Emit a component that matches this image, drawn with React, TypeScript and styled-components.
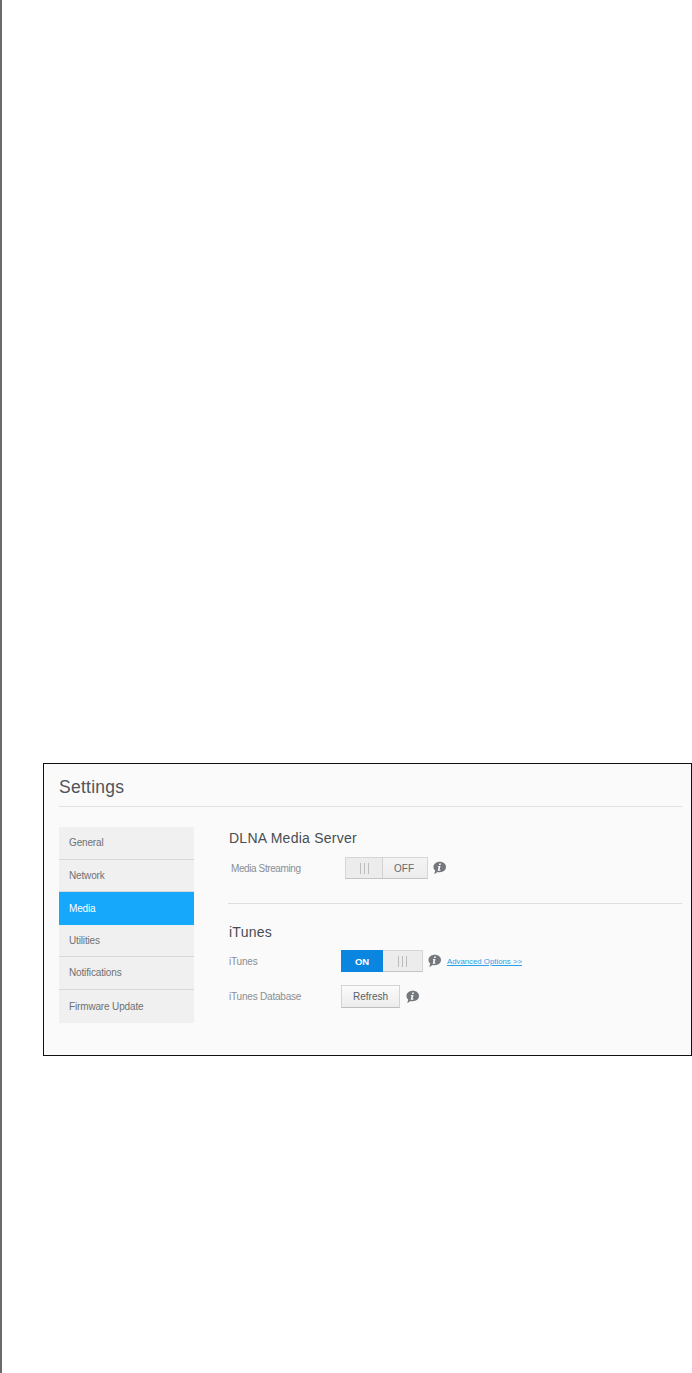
import styled, { createGlobalStyle } from 'styled-components';

const GlobalStyle = createGlobalStyle`
	html, body {
		margin: 0;
		padding: 0;
		background: #fff;
		font-family: 'Liberation Sans', Arial, sans-serif;
	}
`;

const Page = styled.div`
	height: 1373px;
	box-sizing: border-box;
	border-left: 2px solid #6a6a6a;
	padding: 763px 0 0 41px;
	overflow: hidden;
`;

const Frame = styled.div`
	width: 649px;
	height: 293px;
	box-sizing: border-box;
	border: 1px solid #111;
	background: #fafafa;
	padding: 11px 9px 0 15px;
`;

const Title = styled.h1`
	margin: 0;
	height: 31px;
	border-bottom: 1px solid #e2e2e2;
	font-size: 17.5px;
	font-weight: 400;
	line-height: 24px;
	color: #4f545a;
	letter-spacing: 0.25px;
`;

const Body = styled.div`
	display: grid;
	grid-template-columns: 135px 1fr;
	column-gap: 34px;
	margin-top: 20px;
`;

const Nav = styled.nav`
	display: flex;
	flex-direction: column;
	background: #f0f0f0;
`;

const NavItem = styled.div<{ $active?: boolean; $last?: boolean }>`
	height: ${({ $last }) => ($last ? '33.5px' : '32.5px')};
	box-sizing: border-box;
	display: flex;
	align-items: center;
	padding-left: 10px;
	font-size: 10px;
	letter-spacing: -0.15px;
	color: ${({ $active }) => ($active ? '#fff' : '#6e7174')};
	background: ${({ $active }) => ($active ? '#16a8fb' : 'transparent')};
	border-bottom: ${({ $active, $last }) => ($active || $last ? 'none' : '1px solid #d8d8d8')};
`;

const Content = styled.div`
	display: flex;
	flex-direction: column;
	padding-top: 2px;
`;

const SectionTitle = styled.h2`
	margin: 0 0 0 1px;
	font-size: 14px;
	font-weight: 400;
	line-height: 18px;
	color: #484d52;
	letter-spacing: 0.25px;
`;

const Divider = styled.div`
	height: 1px;
	background: #dedede;
	margin: 24px 0 19px;
`;

const Row = styled.div<{ $top: number; $labelWidth: number }>`
	display: grid;
	grid-template-columns: ${({ $labelWidth }) => $labelWidth}px auto auto 1fr;
	align-items: center;
	margin-top: ${({ $top }) => $top}px;
`;

const Label = styled.span<{ $inset: number; $tight: number }>`
	font-size: 10px;
	letter-spacing: ${({ $tight }) => -$tight}px;
	color: #8b8e91;
	padding-left: ${({ $inset }) => $inset}px;
`;

const Toggle = styled.div<{ $width: number; $split: number }>`
	display: grid;
	grid-template-columns: ${({ $split }) => `${$split}px 1fr`};
	width: ${({ $width }) => $width}px;
	height: 22px;
	box-sizing: border-box;
	border: 1px solid #d6d6d6;
	border-bottom-color: #c4c4c4;
	background: #efefef;
`;

const ToggleOff = styled.div`
	display: flex;
	align-items: center;
	justify-content: center;
	padding-right: 2px;
	font-size: 10px;
	color: #66696d;
	background: linear-gradient(#f4f4f4, #ececec);
`;

const ToggleOn = styled.div`
	display: flex;
	align-items: center;
	justify-content: center;
	margin: -1px 0 -1px -1px;
	font-size: 9.5px;
	font-weight: 700;
	color: #fff;
	background: #0a86e0;
`;

const Grip = styled.div<{ $edge?: boolean }>`
	display: flex;
	align-items: center;
	justify-content: center;
	gap: 3px;
	background: #ececec;
	border-right: ${({ $edge }) => ($edge ? '1px solid #d2d2d2' : 'none')};
	& > i {
		width: 1px;
		height: 11px;
		background: #bcbcbc;
	}
`;

const Info = styled.svg<{ $left: number }>`
	display: block;
	width: 15px;
	height: 14px;
	margin-left: ${({ $left }) => $left}px;
`;

const AdvancedLink = styled.a`
	font-size: 7.8px;
	color: #2a9fe8;
	text-decoration: underline;
	margin-left: 5px;
`;

const RefreshButton = styled.button`
	width: 59px;
	height: 23px;
	padding: 0;
	border: 1px solid #d4d4d4;
	border-bottom-color: #bdbdbd;
	background: linear-gradient(#fbfbfb, #ececec);
	font-family: inherit;
	font-size: 10px;
	color: #5c5f63;
`;

const InfoIcon = ({ left }: { left: number }) => (
	<Info $left={left} viewBox='0 0 15 14'>
		<path d='M7.800 .8C11.300 .8 14 3 14 6s-2.700 5.200-6.200 5.200c-.8 0-1.500-.1-2.200-.3L2.300 13.300l.9-3.700C2 8.600 1.500 7.400 1.500 6 1.500 3 4.300 .8 7.800 .8z' fill='#74787d' />
		<path d='M9 2.400l-.4 1.700H6.900l.4-1.700zM8.500 4.900l-.9 3.900h.9l-.2.9H5.700l.9-3.900h-.8l.2-.9z' fill='#fafafa' />
	</Info>
);

const navItems = ['General', 'Network', 'Media', 'Utilities', 'Notifications', 'Firmware Update'];

const App = () => (
	<>
		<GlobalStyle />
		<Page>
			<Frame>
				<Title>Settings</Title>
				<Body>
					<Nav>
						{navItems.map((item, i) => (
							<NavItem key={item} $active={item === 'Media'} $last={i === navItems.length - 1}>
								{item}
							</NavItem>
						))}
					</Nav>
					<Content>
						<SectionTitle>DLNA Media Server</SectionTitle>
						<Row $top={10} $labelWidth={117}>
							<Label $inset={3} $tight={0.4}>Media Streaming</Label>
							<Toggle $width={83} $split={37}>
								<Grip $edge>
									<i />
									<i />
									<i />
								</Grip>
								<ToggleOff>OFF</ToggleOff>
							</Toggle>
							<InfoIcon left={4} />
						</Row>
						<Divider />
						<SectionTitle>iTunes</SectionTitle>
						<Row $top={9} $labelWidth={113}>
							<Label $inset={1} $tight={0.2}>iTunes</Label>
							<Toggle $width={82} $split={41}>
								<ToggleOn>ON</ToggleOn>
								<Grip>
									<i />
									<i />
									<i />
								</Grip>
							</Toggle>
							<InfoIcon left={4} />
							<AdvancedLink>Advanced Options &gt;&gt;</AdvancedLink>
						</Row>
						<Row $top={13} $labelWidth={113}>
							<Label $inset={1} $tight={0.2}>iTunes Database</Label>
							<RefreshButton>Refresh</RefreshButton>
							<InfoIcon left={5} />
						</Row>
					</Content>
				</Body>
			</Frame>
		</Page>
	</>
);

export default App;
